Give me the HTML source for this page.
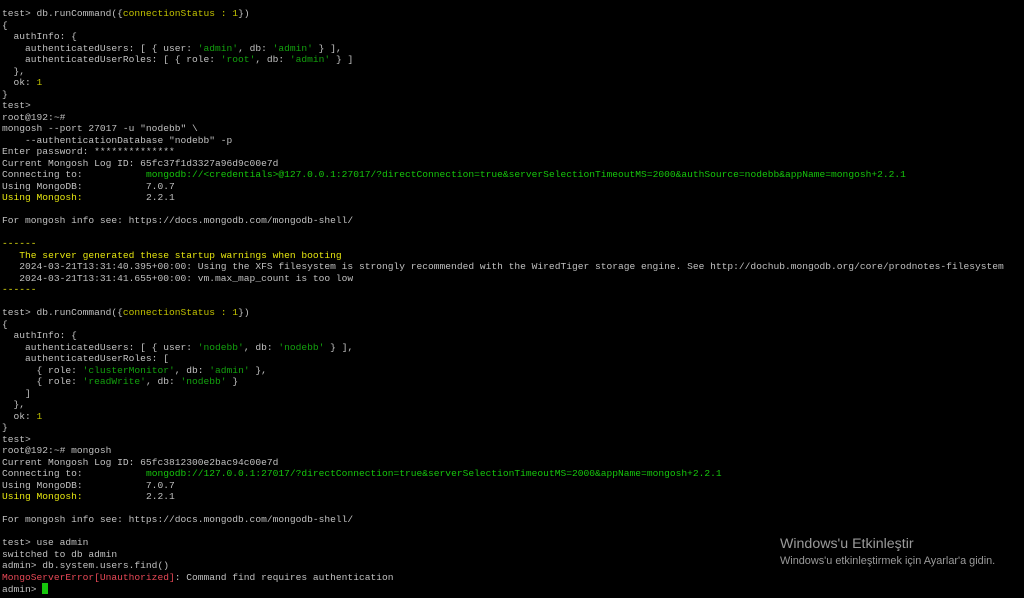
<!DOCTYPE html>
<html><head><meta charset="utf-8"><style>
html,body{margin:0;padding:0;background:#000;width:1024px;height:598px;overflow:hidden}
pre{position:absolute;left:2px;top:8px;margin:0;font-family:"Liberation Mono",monospace;font-size:9.6px;line-height:11.5px;color:#c0c0c0;white-space:pre}
.g{color:#13a10e}.y{color:#c1c100}.G{color:#16c60c}.Y{color:#e5e510}.r{color:#e74856}
.cur{display:inline-block;width:6px;height:11px;background:#16c60c;vertical-align:-2px}
.w1{position:absolute;left:780px;top:536px;font-family:"Liberation Sans",sans-serif;font-size:14.2px;color:#9a9a9a}
.w2{position:absolute;left:780px;top:555px;font-family:"Liberation Sans",sans-serif;font-size:10.9px;color:#9a9a9a}
</style></head><body>
<pre>test&gt; db.runCommand({<span class="y">connectionStatus : 1</span>})
{
  authInfo: {
    authenticatedUsers: [ { user: <span class="g">'admin'</span>, db: <span class="g">'admin'</span> } ],
    authenticatedUserRoles: [ { role: <span class="g">'root'</span>, db: <span class="g">'admin'</span> } ]
  },
  ok: <span class="y">1</span>
}
test&gt;
root@192:~#
mongosh --port 27017 -u "nodebb" \
    --authenticationDatabase "nodebb" -p
Enter password: **************
Current Mongosh Log ID: 65fc37f1d3327a96d9c00e7d
Connecting to:           <span class="G">mongodb://&lt;credentials&gt;@127.0.0.1:27017/?directConnection=true&amp;serverSelectionTimeoutMS=2000&amp;authSource=nodebb&amp;appName=mongosh+2.2.1</span>
Using MongoDB:           7.0.7
<span class="Y">Using Mongosh:</span>           2.2.1

For mongosh info see: https://docs.mongodb.com/mongodb-shell/

<span class="Y">------</span>
   <span class="Y">The server generated these startup warnings when booting</span>
   2024-03-21T13:31:40.395+00:00: Using the XFS filesystem is strongly recommended with the WiredTiger storage engine. See http://dochub.mongodb.org/core/prodnotes-filesystem
   2024-03-21T13:31:41.655+00:00: vm.max_map_count is too low
<span class="Y">------</span>

test&gt; db.runCommand({<span class="y">connectionStatus : 1</span>})
{
  authInfo: {
    authenticatedUsers: [ { user: <span class="g">'nodebb'</span>, db: <span class="g">'nodebb'</span> } ],
    authenticatedUserRoles: [
      { role: <span class="g">'clusterMonitor'</span>, db: <span class="g">'admin'</span> },
      { role: <span class="g">'readWrite'</span>, db: <span class="g">'nodebb'</span> }
    ]
  },
  ok: <span class="y">1</span>
}
test&gt;
root@192:~# mongosh
Current Mongosh Log ID: 65fc3812300e2bac94c00e7d
Connecting to:           <span class="G">mongodb://127.0.0.1:27017/?directConnection=true&amp;serverSelectionTimeoutMS=2000&amp;appName=mongosh+2.2.1</span>
Using MongoDB:           7.0.7
<span class="Y">Using Mongosh:</span>           2.2.1

For mongosh info see: https://docs.mongodb.com/mongodb-shell/

test&gt; use admin
switched to db admin
admin&gt; db.system.users.find()
<span class="r">MongoServerError[Unauthorized]</span>: Command find requires authentication
admin&gt; <span class="cur"></span></pre>
<div class="w1">Windows'u Etkinleştir</div>
<div class="w2">Windows'u etkinleştirmek için Ayarlar'a gidin.</div>
</body></html>
